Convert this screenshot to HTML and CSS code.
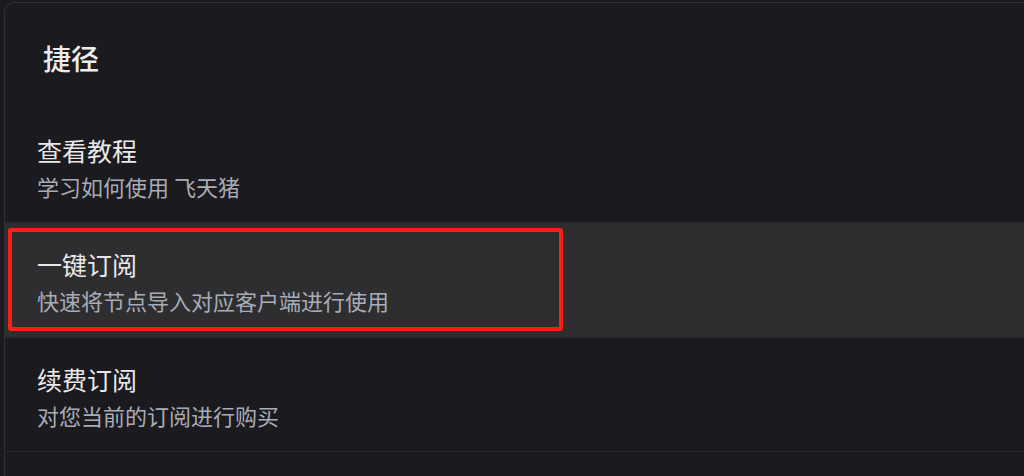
FILE: index.html
```html
<!DOCTYPE html>
<html lang="zh-CN">

<head>
    <meta charset="UTF-8">
    <meta name="viewport" content="width=device-width, initial-scale=1.0">
    <title>捷径</title>
    <link rel="stylesheet" href="styles.css">
</head>

<body>
    <div class="card">
        <div class="card-header">
            <h2>捷径</h2>
        </div>
        <div class="list">
            <div class="item">
                <div class="item-title">查看教程</div>
                <div class="item-desc">学习如何使用 飞天猪</div>
            </div>
            <div class="item active">
                <div class="item-title">一键订阅</div>
                <div class="item-desc">快速将节点导入对应客户端进行使用</div>
                <div class="mark"></div>
            </div>
            <div class="item last">
                <div class="item-title">续费订阅</div>
                <div class="item-desc">对您当前的订阅进行购买</div>
            </div>
        </div>
    </div>
</body>

</html>
```

FILE: styles.css
```css
* {
    box-sizing: border-box;
}

body {
    margin: 0;
    background-color: #1b1a1f;
    font-family: "Noto Sans CJK SC", "Noto Sans", sans-serif;
    overflow: hidden;
    height: 100vh;
}

.card {
    margin: 2px 0 0 4px;
    width: calc(100% + 20px);
    height: calc(100vh - 2px);
    background-color: #1b1a1f;
    border: 1px solid #313134;
    border-bottom: none;
    border-radius: 10px 0 0 0;
    overflow: hidden;
}

.card-header {
    height: 106px;
    display: flex;
    align-items: center;
    padding-left: 38px;
    padding-top: 4px;
}

.card-header h2 {
    margin: 0;
    font-size: 28px;
    font-weight: 500;
    color: #ececee;
    line-height: 1;
}

.list {
    display: flex;
    flex-direction: column;
}

.item {
    position: relative;
    height: 114px;
    padding: 24px 0 0 32px;
    border-bottom: 1px solid #2a2a2d;
}

.item.active {
    height: 115px;
    background-color: #2e2e31;
}

.item-title {
    font-size: 25px;
    line-height: 34px;
    color: #e9e9eb;
}

.item-desc {
    margin-top: 4px;
    font-size: 22px;
    line-height: 30px;
    color: #a7acb6;
}

.mark {
    position: absolute;
    left: 3px;
    top: 5px;
    width: 555px;
    height: 103px;
    border: 4px solid #ff1f17;
    border-radius: 3px;
}
```
